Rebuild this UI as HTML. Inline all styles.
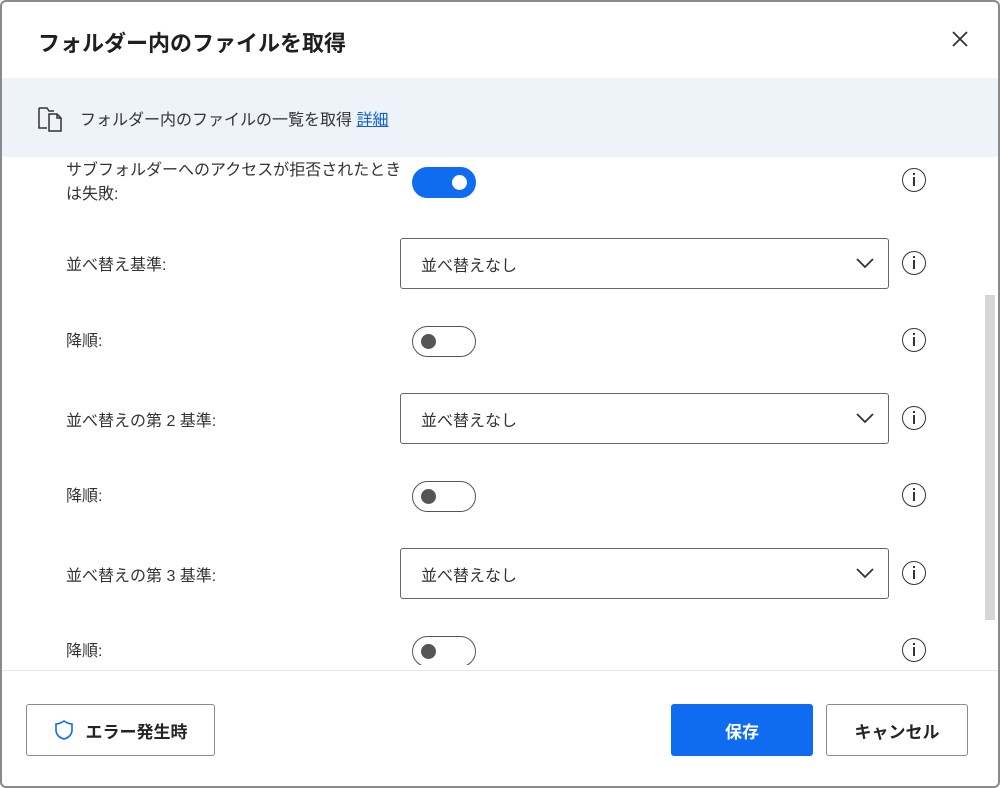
<!DOCTYPE html>
<html><head><meta charset="utf-8"><style>
*{box-sizing:border-box;margin:0;padding:0}
body{width:1000px;height:788px;background:#fff;font-family:"Liberation Sans","Noto Sans CJK JP",sans-serif;color:#242424;position:relative;overflow:hidden}
.frame{position:absolute;inset:0;border:2px solid #8a8a8a;border-radius:6px}
.a{position:absolute}
.title{left:38px;top:26px;font-size:22px;font-weight:bold;color:#1f1f1f}
.band{left:2px;top:78px;width:996px;height:79px;background:#eef3f9}
.lbl{font-size:16px;color:#333;left:66px}
.tog{width:64px;height:31px;border-radius:16px;border:1.5px solid #555;background:#fff}
.tog::after{content:"";position:absolute;left:8px;top:7px;width:15px;height:15px;border-radius:50%;background:#555}
.tog.on{background:#0f6cf0;border-color:#0f6cf0}
.tog.on::after{left:auto;right:8px;background:#fff}
.sel{left:400px;width:489px;height:51px;border:1.5px solid #666;border-radius:3px;font-size:16px;padding:13px 20px;color:#333}
.sel svg{position:absolute;right:14px;top:18px}
.info{left:902px;width:24px;height:24px;border:1.5px solid #333;border-radius:50%}
.info::before{content:"";position:absolute;left:10px;top:4px;width:2px;height:2px;background:#333}
.info::after{content:"";position:absolute;left:10px;top:8px;width:1.5px;height:9px;background:#333}
.btn{top:704px;height:52px;border:1.5px solid #8a8a8a;border-radius:3px;font-size:17px;font-weight:bold;display:flex;align-items:center;justify-content:center}
</style></head><body>
<div class="a title">フォルダー内のファイルを取得</div>
<svg class="a" style="left:951px;top:30px" width="18" height="18"><path d="M2 2L16 16M16 2L2 16" stroke="#333" stroke-width="1.8"/></svg>
<div class="a band"></div>
<svg class="a" style="left:37px;top:106px" width="28" height="26" fill="none" stroke="#333" stroke-width="1.5"><path d="M2 2h8l2 3h5M2 2v20h8"/><path d="M12 8h8l4 4v13H12z M20 8v4h4"/></svg>
<div class="a" style="left:80px;top:106px;font-size:16px;color:#333">フォルダー内のファイルの一覧を取得 <span style="color:#0f5fcf;text-decoration:underline">詳細</span></div>
<div style="position:absolute;left:0;top:157px;width:1000px;height:508px;overflow:hidden">
<div class="a lbl" style="top:2px;line-height:24px">サブフォルダーへのアクセスが拒否されたとき<br>は失敗:</div>
<div class="a tog on" style="left:412px;top:10px"></div>
<div class="a info" style="top:11px"></div>
<div class="a lbl" style="top:94px">並べ替え基準:</div>
<div class="a sel" style="top:81px">並べ替えなし<svg width="18" height="12"><path d="M1 2l8 8 8-8" fill="none" stroke="#333" stroke-width="1.8"/></svg></div>
<div class="a info" style="top:94px"></div>
<div class="a lbl" style="top:170px">降順:</div>
<div class="a tog" style="left:412px;top:169px"></div>
<div class="a info" style="top:171px"></div>
<div class="a lbl" style="top:250px">並べ替えの第 2 基準:</div>
<div class="a sel" style="top:236px">並べ替えなし<svg width="18" height="12"><path d="M1 2l8 8 8-8" fill="none" stroke="#333" stroke-width="1.8"/></svg></div>
<div class="a info" style="top:249px"></div>
<div class="a lbl" style="top:325px">降順:</div>
<div class="a tog" style="left:412px;top:324px"></div>
<div class="a info" style="top:326px"></div>
<div class="a lbl" style="top:405px">並べ替えの第 3 基準:</div>
<div class="a sel" style="top:391px">並べ替えなし<svg width="18" height="12"><path d="M1 2l8 8 8-8" fill="none" stroke="#333" stroke-width="1.8"/></svg></div>
<div class="a info" style="top:404px"></div>
<div class="a lbl" style="top:480px">降順:</div>
<div class="a tog" style="left:412px;top:479px"></div>
<div class="a info" style="top:481px"></div>
<div class="a" style="left:985px;top:138px;width:10px;height:325px;background:#d6d6d6"></div>
</div>
<div class="a" style="left:2px;top:670px;width:996px;height:1px;background:#e6e6e6"></div>
<div class="a btn" style="left:26px;width:189px"><svg width="20" height="22" style="margin-right:12px" fill="none" stroke="#0f6cf0" stroke-width="1.6"><path d="M10 2c3 2 5 3 8 3v6c0 5-4 8-8 9-4-1-8-4-8-9V5c3 0 5-1 8-3z"/></svg>エラー発生時</div>
<div class="a btn" style="left:671px;width:142px;background:#0f6cf0;border-color:#0f6cf0;color:#fff">保存</div>
<div class="a btn" style="left:826px;width:142px">キャンセル</div>
<div class="frame"></div>
</body></html>
